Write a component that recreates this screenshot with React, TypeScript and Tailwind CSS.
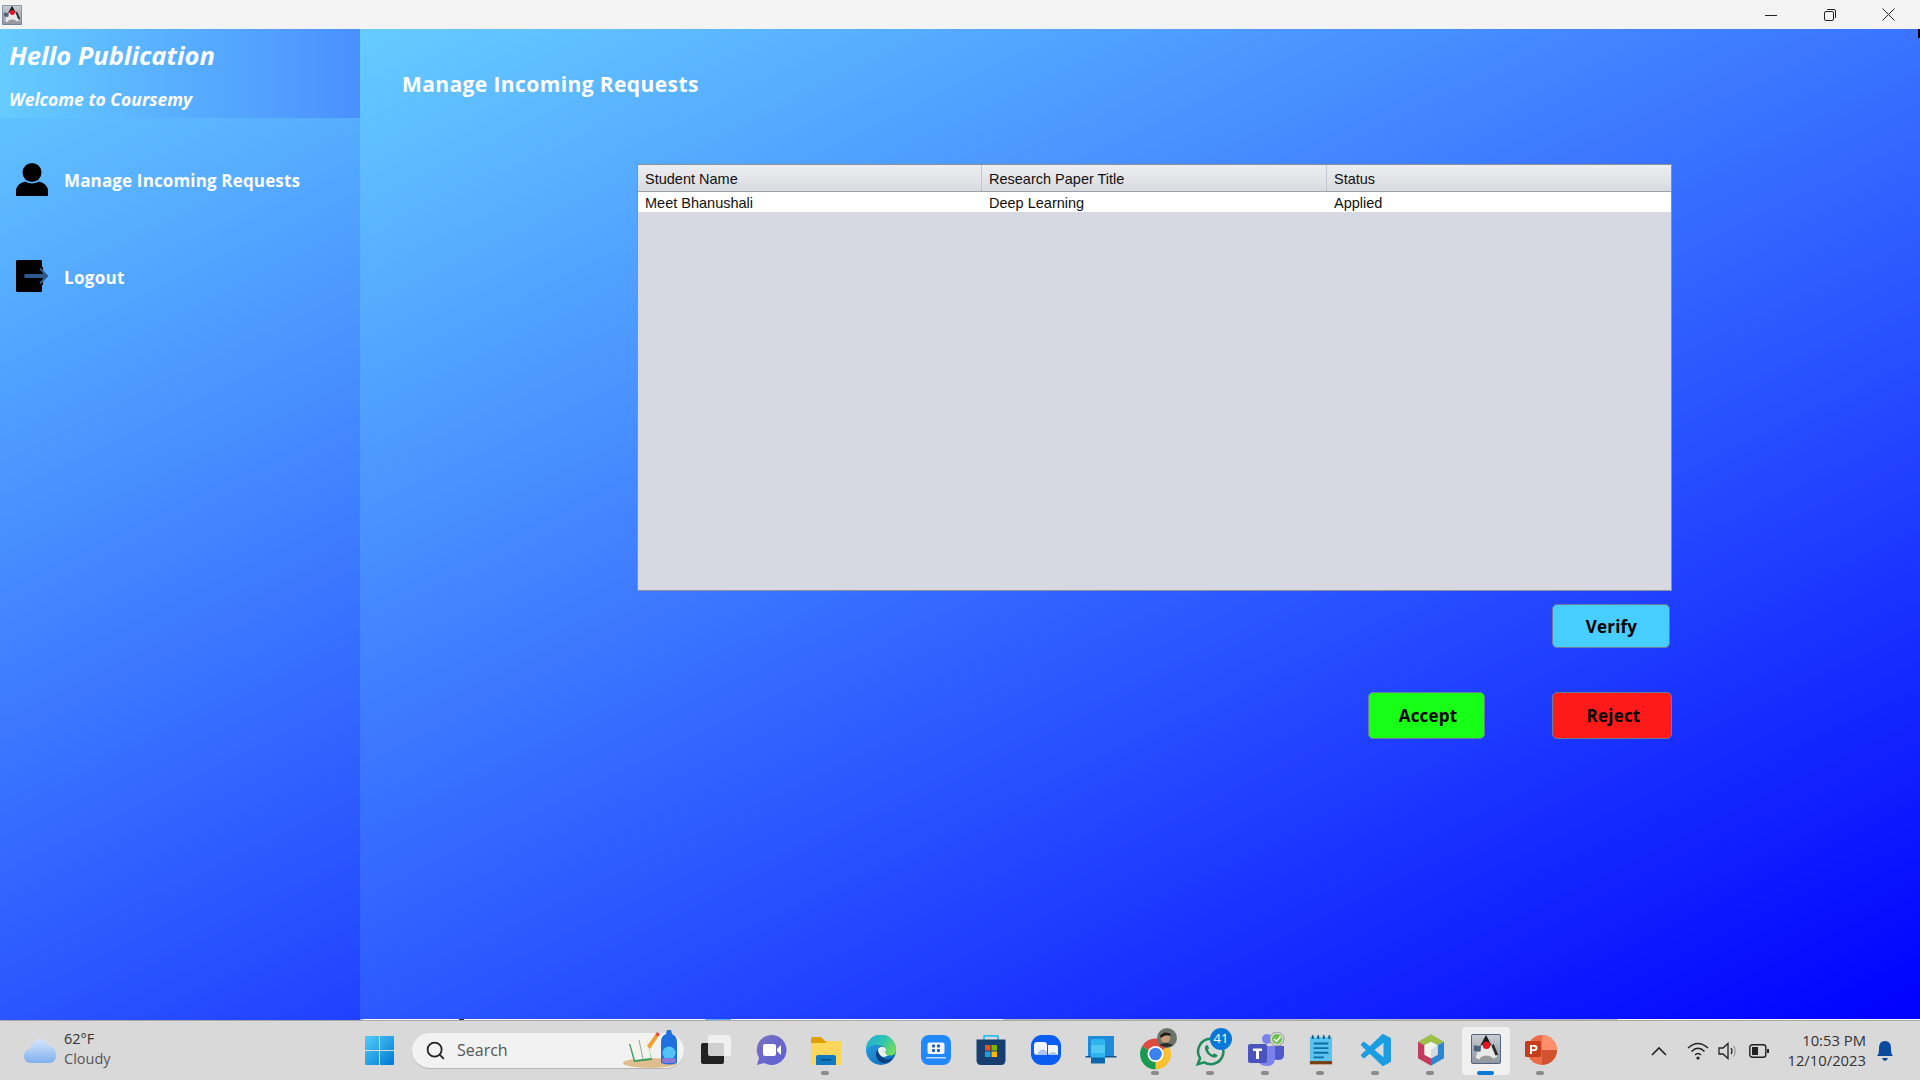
import React from "react";
import { Search } from "lucide-react";

const uiFont = "font-['Open_Sans',sans-serif]";

const DukeIcon = ({ size }: { size: number }) => (
	<svg width={size} height={size} viewBox="0 0 32 32">
		<defs>
			<linearGradient id="dukeBg" x1="0" y1="0" x2="0" y2="1">
				<stop offset="0" stopColor="#c9cdd4" />
				<stop offset="1" stopColor="#8f96a3" />
			</linearGradient>
		</defs>
		<rect x="0.5" y="0.5" width="31" height="31" rx="1.5" fill="url(#dukeBg)" stroke="#47597a" />
		<path d="M16 1 L23 14 L9 14 Z" fill="#1a1a1a" />
		<path d="M9 13 Q16 9 23 13 L28 24 Q20 29 16 27 Q10 29 5 25 Z" fill="#e8e8e8" />
		<path d="M3 12 L11 13 L10 19 L3 18 Z" fill="#4b6478" />
		<path d="M24 10 L29 22 L26 23 L22 13 Z" fill="#2c2c2c" />
		<path d="M10 25 Q16 21 23 25 L24 29 L8 29 Z" fill="#9a9a9a" />
		<circle cx="16.5" cy="12" r="4" fill="#e3141f" />
	</svg>
);

const PersonIcon = () => (
	<svg width="32" height="33" viewBox="0 0 32 33">
		<circle cx="16" cy="9.5" r="9.5" fill="#000" />
		<path d="M0 33 V28 Q0 21 9 18.5 Q16 22.5 23 18.5 Q32 21 32 28 V33 Z" fill="#000" />
	</svg>
);

const LogoutIcon = () => (
	<svg width="32" height="32" viewBox="0 0 32 32">
		<path d="M1.5 0 H25 Q26 0 26 1.5 V7 L22 7 V25 H26 V30.5 Q26 32 25 32 H1.5 Q0 32 0 30.5 V1.5 Q0 0 1.5 0 Z" fill="#000" />
		<path d="M20 7 H27 V25 H20 Z" fill="#000" />
		<path d="M10 16 H29" stroke="#2c5a8c" strokeWidth="4" strokeLinecap="round" />
		<path d="M24 8.5 L31 16 L24 23.5" fill="none" stroke="#2c5a8c" strokeWidth="2" />
	</svg>
);

const CloudIcon = () => (
	<svg width="32" height="26" viewBox="0 0 32 26">
		<defs>
			<linearGradient id="cloudFill" x1="0" y1="0" x2="0" y2="1">
				<stop offset="0" stopColor="#d7e6fb" />
				<stop offset="1" stopColor="#7fb0ee" />
			</linearGradient>
		</defs>
		<path
			d="M7 25 Q0 25 0 18 Q0 12 6 11 Q8 1 16 1 Q23 1 25 8 Q32 9 32 17 Q32 25 25 25 Z"
			fill="url(#cloudFill)"
		/>
	</svg>
);

const WindowsLogo = () => (
	<svg width="29" height="29" viewBox="0 0 29 29">
		<defs>
			<linearGradient id="winFill" x1="0" y1="0" x2="1" y2="1">
				<stop offset="0" stopColor="#52cdf8" />
				<stop offset="1" stopColor="#0078d4" />
			</linearGradient>
		</defs>
		<path d="M0 1 Q0 0 1 0 H14 V14 H0 Z M15 0 H28 Q29 0 29 1 V14 H15 Z M0 15 H14 V29 H1 Q0 29 0 28 Z M15 15 H29 V28 Q29 29 28 29 H15 Z" fill="url(#winFill)" />
	</svg>
);

const SearchArt = () => (
	<svg width="58" height="40" viewBox="0 0 58 40">
		<ellipse cx="28" cy="34" rx="27" ry="5" fill="#e0bd8c" />
		<path d="M7 15 L25 11 L30 31 L12 33 Z" fill="#3a9d5d" />
		<path d="M8 14 L25 9 L29 29 L13 31 Z" fill="#f4f4ee" />
		<path d="M17 11 L21 30" stroke="#9aa69a" strokeWidth="1" />
		<path d="M25 17 L33 6 L36 8 L28 20 Z" fill="#f0a030" />
		<path d="M33 6 L35 3 L38 5 L36 8 Z" fill="#e8503a" />
		<path d="M39 34 V13 Q39 7 44 5 L45 1 H49 L50 5 Q55 7 55 13 V34 Q47 37 39 34 Z" fill="#1f6fe0" />
		<circle cx="47" cy="24" r="6.5" fill="#52c4f5" />
		<rect x="40" y="29" width="14" height="5" rx="2" fill="#8878d8" />
	</svg>
);

const TaskViewIcon = () => (
	<svg width="32" height="32" viewBox="0 0 32 32">
		<rect x="1" y="9" width="23" height="21" rx="2" fill="#222" />
		<rect x="8" y="1" width="23" height="21" rx="2" fill="#f5f5f5" fillOpacity="0.82" />
	</svg>
);

const MeetIcon = () => (
	<svg width="32" height="32" viewBox="0 0 32 32">
		<defs>
			<linearGradient id="meetFill" x1="0" y1="0" x2="1" y2="1">
				<stop offset="0" stopColor="#7b70bf" />
				<stop offset="1" stopColor="#5b5fd6" />
			</linearGradient>
		</defs>
		<path d="M16 1 A15 15 0 1 1 9 29 L2 31 L4 24 A15 15 0 0 1 16 1 Z" fill="url(#meetFill)" />
		<rect x="8" y="10" width="13" height="12" rx="2" fill="#fff" />
		<path d="M22 15 L26 11 V21 L22 17 Z" fill="#fff" />
	</svg>
);

const FolderIcon = () => (
	<svg width="32" height="32" viewBox="0 0 32 32">
		<path d="M1 5 Q1 3 3 3 H11 L15 7 H31 V12 H1 Z" fill="#e0a000" />
		<path d="M1 9 H15 L17 7 H30 Q31 7 31 8 V31 H2 Q1 31 1 30 Z" fill="#fcd75b" />
		<path d="M6 31 V23 Q6 21 8 21 H24 Q26 21 26 23 V31 Z" fill="#0f79c4" />
		<rect x="11" y="25" width="10" height="1.5" fill="#0a4a80" />
	</svg>
);

const EdgeIcon = () => (
	<svg width="30" height="30" viewBox="0 0 30 30">
		<defs>
			<linearGradient id="edgeA" x1="0" y1="0" x2="1" y2="0.6">
				<stop offset="0" stopColor="#1fa8dc" />
				<stop offset="0.55" stopColor="#2fc6b0" />
				<stop offset="1" stopColor="#6fdc5e" />
			</linearGradient>
			<linearGradient id="edgeB" x1="0" y1="0.2" x2="0.8" y2="1">
				<stop offset="0" stopColor="#2aa2e4" />
				<stop offset="1" stopColor="#0e67b8" />
			</linearGradient>
		</defs>
		<circle cx="15" cy="15" r="15" fill="url(#edgeB)" />
		<path d="M0 14 A15 15 0 0 1 30 15 Q30 20.5 24 20.5 Q19.5 20.5 20 18 Q21.5 13 15.5 10.5 Q6 8 0 14 Z" fill="url(#edgeA)" />
		<path d="M12 14 Q8 19 12 25 Q16 30 23 27 Q26 25.5 27 23 Q22 25.5 18 23.5 Q13 20.5 12 14 Z" fill="#0b3f82" />
		<path d="M12 14 Q15 10.5 18.5 12.5 Q21 14.5 19.5 17 Q19 19 22 20.5 Q17 23.5 14 20 Q11.5 17 12 14 Z" fill="#eef3f2" />
		<path d="M15.5 15 Q17 13.5 18.5 15 Q17.5 18 19 19.5 Q16 18.5 15.5 15 Z" fill="#dfe6e6" />
	</svg>
);

const PhoneLinkIcon = () => (
	<svg width="30" height="30" viewBox="0 0 30 30">
		<rect x="0" y="0" width="30" height="30" rx="8" fill="#2088fa" />
		<rect x="6.5" y="7.5" width="17" height="11.5" rx="2" fill="#f5f8ff" />
		<rect x="11" y="9.5" width="3" height="3" rx="0.8" fill="#1e60c0" />
		<rect x="16" y="9.5" width="3" height="3" rx="0.8" fill="#1e60c0" />
		<rect x="11" y="14" width="3" height="3" rx="0.8" fill="#1e60c0" />
		<rect x="16" y="14" width="3" height="3" rx="0.8" fill="#1e60c0" />
		<rect x="5" y="22" width="20" height="1.5" fill="#bcd8ff" />
	</svg>
);

const StoreIcon = () => (
	<svg width="30" height="30" viewBox="0 0 30 30">
		<path d="M8 5 V1.5 Q8 0.8 9 0.8 H21 Q22 0.8 22 1.5 V5" fill="none" stroke="#2ac0ee" strokeWidth="1.8" />
		<path d="M0.5 4.5 H29.5 V25 Q29.5 30 25 30 H5 Q0.5 30 0.5 25 Z" fill="#163f70" />
		<rect x="9" y="10" width="5.5" height="5.5" fill="#e8502a" />
		<rect x="15.5" y="10" width="5.5" height="5.5" fill="#7ab800" />
		<rect x="9" y="16.5" width="5.5" height="5.5" fill="#1d9ee0" />
		<rect x="15.5" y="16.5" width="5.5" height="5.5" fill="#ffb900" />
	</svg>
);

const ZoomIcon = () => (
	<svg width="30" height="30" viewBox="0 0 30 30">
		<rect x="0" y="0" width="30" height="30" rx="11" fill="#0b5cf0" />
		<path d="M3 10 Q3 7 6 7 H13 Q16 7 16 10 V20 H6 Q3 20 3 17 Z" fill="#f0f4ff" />
		<path d="M17 10 H25 Q27 10 27 12 V20 H19 Q17 20 17 18 Z" fill="#f0f4ff" />
		<path d="M6 20 Q10 11 16 17 V20 Z" fill="#a9c4f5" />
		<path d="M17 20 Q22 14 27 20 Z" fill="#a9c4f5" />
	</svg>
);

const LaptopIcon = () => (
	<svg width="32" height="28" viewBox="0 0 32 28">
		<rect x="3" y="0" width="26" height="20" fill="#1f8ad8" />
		<rect x="0.5" y="20" width="31" height="1.5" fill="#10558c" />
		<rect x="6" y="3" width="14" height="24" rx="1" fill="#2fb4ef" />
		<rect x="6" y="9" width="14" height="8" fill="#4fc8f5" />
		<rect x="6" y="21.5" width="14" height="6" fill="#0c66ac" />
	</svg>
);

const ChromeIcon = () => (
	<svg width="40" height="42" viewBox="0 0 40 42">
		<g transform="translate(15.5 26)">
			<path d="M0 0 L-13.4 -7.75 A15.5 15.5 0 0 1 13.4 -7.75 Z" fill="#dd4b3d" />
			<path d="M0 0 L13.4 -7.75 A15.5 15.5 0 0 1 0 15.5 Z" fill="#fbc02d" />
			<path d="M0 0 L0 15.5 A15.5 15.5 0 0 1 -13.4 -7.75 Z" fill="#1a9a50" />
			<circle r="8" fill="#fff" />
			<circle r="6.3" fill="#3b82ec" />
		</g>
		<circle cx="27" cy="10" r="10" fill="#6b7468" />
		<circle cx="25.5" cy="10" r="4.8" fill="#c69a7a" />
		<path d="M20 8 Q24 2 31 6 L30 8 Q25 6 21 10 Z" fill="#1d1a18" />
		<path d="M19 17 Q26 13 33 17 Q27 21 19 17 Z" fill="#2a2d2a" />
	</svg>
);

const WhatsAppIcon = () => (
	<svg width="29" height="29" viewBox="0 0 32 32">
		<path
			d="M16 2 A14 14 0 1 1 9 28 L2 30 L4.5 23.5 A14 14 0 0 1 16 2 Z"
			fill="none"
			stroke="#1e8d5c"
			strokeWidth="2.8"
		/>
		<path d="M11 9 Q9 11 10 14 Q13 21 20 23 Q23 23 24 20 L20 18 L18.5 19.5 Q14.5 18 13 14 L14.5 12.5 L13 9 Z" fill="#1e8d5c" />
	</svg>
);

const TeamsIcon = () => (
	<svg width="40" height="36" viewBox="0 0 40 36">
		<circle cx="20" cy="7" r="5" fill="#7b83eb" />
		<circle cx="31" cy="10" r="4" fill="#5059c9" />
		<path d="M25 14 H37 V23 Q37 28 31 28 Q25 28 25 23 Z" fill="#5059c9" />
		<path d="M11 14 H28 V26 Q28 34 20 34 Q11 34 11 26 Z" fill="#7b83eb" />
		<rect x="1" y="12" width="19" height="19" rx="2" fill="#4b53bc" />
		<path d="M6 16.5 H15 V19 H12 V27 H9 V19 H6 Z" fill="#fff" />
		<circle cx="30" cy="7" r="7" fill="#d9d9d9" stroke="#999" />
		<circle cx="30" cy="7" r="5" fill="#6cc24a" />
		<path d="M27 7 L29.5 9.5 L33.5 4.5" fill="none" stroke="#fff" strokeWidth="1.5" />
	</svg>
);

const NotepadIcon = () => (
	<svg width="24" height="32" viewBox="0 0 26 32">
		<rect x="1" y="2" width="24" height="28" rx="1" fill="#5ac4ee" />
		<rect x="1" y="28" width="24" height="3.5" fill="#7a3f10" />
		<path d="M4 0 V4 M10 0 V4 M16 0 V4 M22 0 V4" stroke="#135a8c" strokeWidth="2" />
		<path d="M5 9 H21 M5 14 H21 M5 19 H21 M5 24 H16" stroke="#0f6ba8" strokeWidth="2" />
	</svg>
);

const VSCodeIcon = () => (
	<svg width="30" height="32" viewBox="0 0 24 24" preserveAspectRatio="none">
		<path
			d="M23.15 2.587L18.21.21a1.494 1.494 0 0 0-1.705.29l-9.46 8.63-4.12-3.128a.999.999 0 0 0-1.276.057L.327 7.261A1 1 0 0 0 .326 8.74L3.899 12 .326 15.26a1 1 0 0 0 .001 1.479L1.65 17.94a.999.999 0 0 0 1.276.057l4.12-3.128 9.46 8.63a1.492 1.492 0 0 0 1.704.29l4.942-2.377A1.5 1.5 0 0 0 24 20.06V3.939a1.5 1.5 0 0 0-.85-1.352zm-5.146 14.861L10.826 12l7.178-5.448v10.896z"
			fill="#1b9de2"
		/>
	</svg>
);

const CubeIcon = () => (
	<svg width="26" height="32" viewBox="0 0 28 34">
		<path d="M14 0 L28 8 L21 12 L14 8 L7 12 L0 8 Z" fill="#9cc04a" />
		<path d="M0 8 L7 12 V22 L14 26 V34 L0 26 Z" fill="#c23a5e" />
		<path d="M28 8 L21 12 V22 L14 26 V34 L28 26 Z" fill="#2f86d0" />
		<path d="M14 8 L21 12 V22 L14 26 L7 22 V12 Z" fill="#f2f4ea" />
		<path d="M14 17 L21 12 V22 L14 26 Z" fill="#d5dae0" />
	</svg>
);

const PowerPointIcon = () => (
	<svg width="32" height="30" viewBox="0 0 32 30">
		<circle cx="17" cy="15" r="15" fill="#ed6c47" />
		<path d="M17 0 A15 15 0 0 1 32 15 H17 Z" fill="#ff8f6b" />
		<path d="M17 15 H32 A15 15 0 0 1 17 30 Z" fill="#d35230" />
		<rect x="0" y="6" width="16" height="16" rx="1.5" fill="#c43e1c" />
		<path d="M5 10 H9.5 Q12.5 10 12.5 13 Q12.5 16 9.5 16 H7 V19 H5 Z M7 11.8 V14.2 H9 Q10.5 14.2 10.5 13 Q10.5 11.8 9 11.8 Z" fill="#fff" />
	</svg>
);

const TaskCell = ({
	children,
	running,
}: {
	children: React.ReactNode;
	running?: boolean;
}) => (
	<div className="relative flex h-[60px] w-[55px] items-center justify-center pb-[1px]">
		{children}
		{running && (
			<span className="absolute bottom-[6px] left-[23px] h-[4px] w-[8px] rounded-full bg-[#8a8a8a]" />
		)}
	</div>
);

const ActionButton = ({
	label,
	className,
}: {
	label: string;
	className: string;
}) => (
	<button
		type="button"
		className={`flex items-center justify-center rounded-[5px] border border-[#6b7a99] text-[17px] font-bold tracking-[0.2px] text-black ${className}`}
	>
		{label}
	</button>
);

const App = () => {
	return (
		<div className={`flex h-[1080px] w-[1920px] flex-col overflow-hidden ${uiFont}`}>
			{/* title bar */}
			<div className="flex h-[29px] shrink-0 items-center justify-between bg-[#f3f3f3]">
				<div className="ml-[2px] flex items-center">
					<DukeIcon size={20} />
				</div>
				<div className="flex items-center">
					<div className="flex w-[58px] justify-center">
						<svg width="12" height="12" viewBox="0 0 12 12">
							<path d="M0 6.5 H12" stroke="#222" strokeWidth="1" />
						</svg>
					</div>
					<div className="flex w-[59px] justify-center">
						<svg width="12" height="12" viewBox="0 0 12 12">
							<rect x="0.5" y="2.5" width="9" height="9" rx="1.5" fill="none" stroke="#222" />
							<path d="M3 1 Q3 0.5 4 0.5 H10 Q11.5 0.5 11.5 2 V8 Q11.5 9 11 9" fill="none" stroke="#222" />
						</svg>
					</div>
					<div className="mr-[3px] flex w-[58px] justify-center">
						<svg width="13" height="13" viewBox="0 0 13 13">
							<path d="M0.5 0.5 L12.5 12.5 M12.5 0.5 L0.5 12.5" stroke="#222" strokeWidth="1" />
						</svg>
					</div>
				</div>
			</div>

			<div className="relative flex h-[991px] shrink-0">
				{/* sidebar */}
				<aside className="flex w-[360px] shrink-0 flex-col bg-[linear-gradient(154deg,#66ccff,#2040ff)] text-white">
					<div className="flex h-[89px] flex-col bg-[linear-gradient(90deg,#66ccff,#4a90ff)] pl-[9px]">
						<h1 className="mt-[7px] text-[25.5px] leading-[38px] font-bold italic">
							Hello Publication
						</h1>
						<p className="mt-[13px] text-[17.5px] leading-[24px] font-bold italic">
							Welcome to Coursemy
						</p>
					</div>
					<nav className="mt-[45px] flex flex-col gap-[64px] pl-[16px]">
						<a className="flex h-[33px] items-center gap-[16px] text-[17px] font-bold tracking-[0.15px]">
							<PersonIcon />
							<span className="pt-[2px]">Manage Incoming Requests</span>
						</a>
						<a className="flex h-[32px] items-center gap-[16px] text-[17px] font-bold tracking-[0.3px]">
							<LogoutIcon />
							<span className="pt-[3px]">Logout</span>
						</a>
					</nav>
				</aside>

				{/* main panel */}
				<main className="flex flex-1 flex-col bg-[linear-gradient(154deg,#66ccff,#0000ff)]">
					<h2 className="mt-[40px] ml-[42px] text-[21px] leading-[30px] font-bold tracking-[0.4px] text-white">
						Manage Incoming Requests
					</h2>

					<div className="mt-[65px] ml-[277px] w-[1035px]">
						<div className="h-[427px] border border-[#8a8f99] bg-[#d6d9e2] font-['Liberation_Sans',sans-serif] text-[14.5px] text-[#111]">
							<div className="grid h-[27px] grid-cols-[344px_345px_1fr] border-b border-[#9aa1b0] bg-[linear-gradient(180deg,#eceef1,#d9dbe0)]">
								<div className="border-r border-[#c4c7cf] pt-[4px] pl-[7px] leading-[20px]">Student Name</div>
								<div className="border-r border-[#c4c7cf] pt-[4px] pl-[7px] leading-[20px]">Research Paper Title</div>
								<div className="pt-[4px] pl-[7px] leading-[20px]">Status</div>
							</div>
							<div className="grid h-[20px] grid-cols-[344px_345px_1fr] bg-white leading-[23px]">
								<div className="pl-[7px]">Meet Bhanushali</div>
								<div className="pl-[7px]">Deep Learning</div>
								<div className="pl-[7px]">Applied</div>
							</div>
						</div>

						<div className="mt-[13px] flex justify-end pr-[2px]">
							<ActionButton label="Verify" className="h-[44px] w-[118px] bg-[#47ceff] pt-[1px] pl-[1px]" />
						</div>
						<div className="mt-[44px] flex justify-end gap-[67px]">
							<ActionButton label="Accept" className="h-[47px] w-[117px] bg-[#17ff17] pl-[3px]" />
							<ActionButton label="Reject" className="h-[47px] w-[120px] bg-[#ff1a1a] pl-[3px]" />
						</div>
					</div>

					{/* slivers of the window behind, just above the taskbar */}
					<div className="mt-auto flex h-[1px] shrink-0">
						<span className="w-[3px] bg-[#9db4ff]" />
						<span className="w-[96px] bg-white" />
						<span className="w-[5px] bg-[#333]" />
						<span className="w-[241px] bg-white" />
						<span className="w-[26px] bg-[#5fb0ff]" />
						<span className="w-[272px] bg-white" />
						<span className="w-[615px] bg-[#b9bdc9]" />
						<span className="flex-1 bg-white" />
					</div>
				</main>
				<span className="absolute top-0 right-0 h-[9px] w-[2px] bg-black" />
			</div>

			{/* windows taskbar */}
			<footer className="flex h-[60px] shrink-0 items-center border-t border-[#a9a9a9] bg-[#d9d9d9] font-['Open_Sans',sans-serif] text-[#333]">
				<div className="flex w-[352px] shrink-0 items-center gap-[8px] pl-[24px]">
					<CloudIcon />
					<div className="mb-[4px] flex flex-col text-[14.5px] leading-[20px]">
						<span>62°F</span>
						<span className="text-[#555]">Cloudy</span>
					</div>
				</div>
				<TaskCell>
					<WindowsLogo />
				</TaskCell>
				<div className="ml-[5px] flex h-[36px] w-[272px] shrink-0 items-center rounded-full border-b border-[#b5b5b5] bg-[#f2f2f2] pl-[13px]">
					<Search size={21} strokeWidth={2} className="text-[#222]" />
					<span className="ml-[11px] text-[16px] text-[#555]">Search</span>
					<div className="mt-[-3px] ml-auto mr-[4px]">
						<SearchArt />
					</div>
				</div>
				<div className="ml-[4px] flex shrink-0">
					<TaskCell>
						<TaskViewIcon />
					</TaskCell>
					<TaskCell>
						<MeetIcon />
					</TaskCell>
					<TaskCell running>
						<FolderIcon />
					</TaskCell>
					<TaskCell>
						<EdgeIcon />
					</TaskCell>
					<TaskCell>
						<PhoneLinkIcon />
					</TaskCell>
					<TaskCell>
						<StoreIcon />
					</TaskCell>
					<TaskCell>
						<ZoomIcon />
					</TaskCell>
					<TaskCell>
						<LaptopIcon />
					</TaskCell>
					<TaskCell running>
						<div className="mt-[-2px] ml-[9px]">
							<ChromeIcon />
						</div>
					</TaskCell>
					<TaskCell running>
						<div className="mt-[2px]">
							<WhatsAppIcon />
						</div>
						<span className="absolute top-[7px] left-[27px] flex h-[22px] w-[22px] items-center justify-center rounded-full bg-[#0a78d6] text-[13px] text-white">
							41
						</span>
					</TaskCell>
					<TaskCell running>
						<div className="ml-[3px]">
							<TeamsIcon />
						</div>
					</TaskCell>
					<TaskCell running>
						<NotepadIcon />
					</TaskCell>
					<TaskCell running>
						<VSCodeIcon />
					</TaskCell>
					<TaskCell running>
						<CubeIcon />
					</TaskCell>
					<div className="relative flex h-[60px] w-[55px] items-center justify-center">
						<div className="flex h-[48px] w-[48px] items-center justify-center rounded-[4px] bg-[#f0f0f0] pb-[3px]">
							<DukeIcon size={30} />
						</div>
						<span className="absolute bottom-[6px] left-[19px] h-[4px] w-[17px] rounded-full bg-[#0a78d6]" />
					</div>
					<TaskCell running>
						<PowerPointIcon />
					</TaskCell>
				</div>

				{/* tray */}
				<div className="ml-[83px] flex flex-1 items-center">
					<svg width="16" height="10" viewBox="0 0 16 10">
						<path d="M1 9 L8 2 L15 9" fill="none" stroke="#222" strokeWidth="1.6" />
					</svg>
					<svg width="22" height="18" viewBox="0 0 22 18" className="ml-[20px]">
						<path d="M1 6 Q11 -3 21 6 M4.5 9.5 Q11 3 17.5 9.5 M8 13 Q11 10 14 13" fill="none" stroke="#222" strokeWidth="1.5" />
						<circle cx="11" cy="16" r="1.6" fill="#222" />
					</svg>
					<svg width="20" height="18" viewBox="0 0 20 18" className="ml-[9px]">
						<path d="M1 6 H5 L10 1.5 V16.5 L5 12 H1 Z" fill="none" stroke="#222" strokeWidth="1.3" />
						<path d="M13 6 Q15 9 13 12" fill="none" stroke="#222" strokeWidth="1.3" />
						<path d="M15.5 3.5 Q19 9 15.5 14.5" fill="none" stroke="#999" strokeWidth="1.2" />
					</svg>
					<svg width="20" height="14" viewBox="0 0 20 14" className="ml-[11px]">
						<rect x="0.8" y="0.8" width="16" height="12.4" rx="2.5" fill="none" stroke="#222" strokeWidth="1.4" />
						<rect x="3" y="3" width="6" height="8" fill="#222" />
						<rect x="18" y="5" width="2" height="4" fill="#222" />
					</svg>
					<div className="mb-[2px] ml-[11px] flex w-[86px] flex-col items-end text-[14.8px] leading-[20px]">
						<span>10:53 PM</span>
						<span>12/10/2023</span>
					</div>
					<svg width="18" height="22" viewBox="0 0 18 22" className="ml-[10px]">
						<path d="M1 16 Q3 14 3 10 V8 Q3 1 9 1 Q15 1 15 8 V10 Q15 14 17 16 Z" fill="#0a4a9c" />
						<path d="M6 18 H12 Q11 21 9 21 Q7 21 6 18 Z" fill="#0a4a9c" />
					</svg>
				</div>
			</footer>
		</div>
	);
};

export default App;
